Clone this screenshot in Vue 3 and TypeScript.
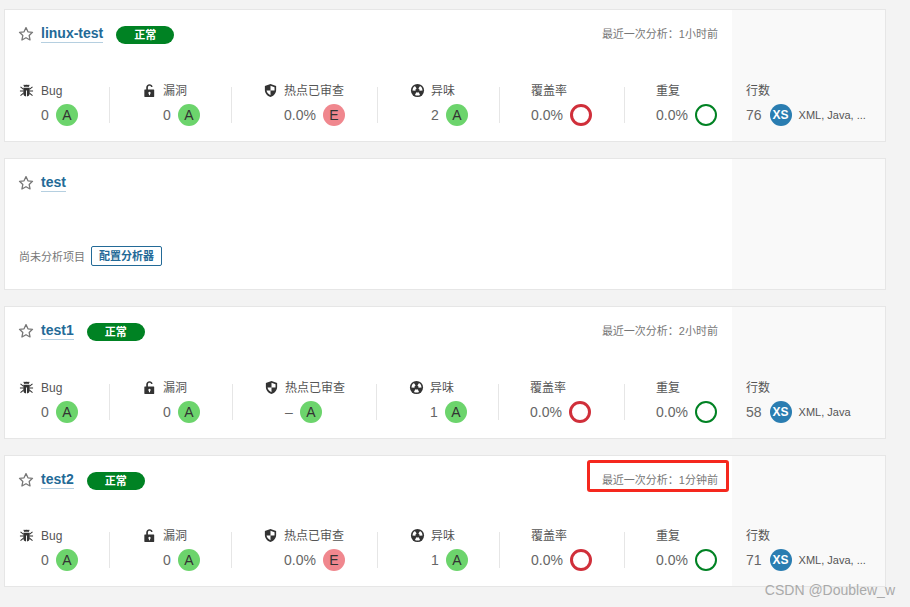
<script setup lang="ts">
type Rating = 'A' | 'E'

interface Project {
  name: string
  status: boolean
  analysis?: string
  highlight?: boolean
  height: number
  widths?: number[]
  bugs?: number
  vulns?: number
  hotspots?: string
  hotspotRating?: Rating
  smells?: number
  lines?: number
  langs?: string
}

const projects: Project[] = [
  {
    name: 'linux-test', status: true, analysis: '最近一次分析\uFF1A1小时前', height: 133,
    widths: [90, 121, 145, 121, 124], bugs: 0, vulns: 0, hotspots: '0.0%', hotspotRating: 'E',
    smells: 2, lines: 76, langs: 'XML, Java, ...',
  },
  { name: 'test', status: false, height: 132 },
  {
    name: 'test1', status: true, analysis: '最近一次分析\uFF1A2小时前', height: 133,
    widths: [90, 122, 143, 121, 125], bugs: 0, vulns: 0, hotspots: '–', hotspotRating: 'A',
    smells: 1, lines: 58, langs: 'XML, Java',
  },
  {
    name: 'test2', status: true, analysis: '最近一次分析\uFF1A1分钟前', highlight: true, height: 132,
    widths: [90, 121, 145, 121, 124], bugs: 0, vulns: 0, hotspots: '0.0%', hotspotRating: 'E',
    smells: 1, lines: 71, langs: 'XML, Java, ...',
  },
]

const starPath = 'M8 1.6l1.95 4.2 4.55.55-3.35 3.1.9 4.5L8 11.7l-4.05 2.25.9-4.5L1.5 6.35l4.55-.55z'
const smellWedge = 'M6.700 6.200L5.300 3.300A5.500 5.500 0 0 1 10.700 3.300L9.300 6.200A2.300 2.300 0 0 0 6.700 6.200Z'
</script>

<template>
  <div class="page">
    <div
      v-for="p in projects"
      :key="p.name"
      class="card"
      :style="{ height: p.height + 'px' }"
    >
      <div class="main">
        <div class="head">
          <svg class="star" viewBox="0 0 16 16" width="16" height="16">
            <path :d="starPath" fill="none" stroke="#777" stroke-width="1.3" stroke-linejoin="round" />
          </svg>
          <a class="title">{{ p.name }}</a>
          <span v-if="p.status" class="badge">正常</span>
          <span v-if="p.analysis" class="analysis">
            {{ p.analysis }}
            <i v-if="p.highlight" class="mark" />
          </span>
        </div>

        <div v-if="p.widths" class="measures">
          <div class="measure first" :style="{ width: p.widths[0] + 'px' }">
            <svg class="icon" viewBox="0 0 16 16" width="15" height="15">
              <path fill="#333" d="M5.200 3.900C5.600 2.600 6.700 1.900 8 1.900s2.400.7 2.800 2zM4.600 5h6.800v6.200c0 1.900-1.500 3.300-3.400 3.300s-3.400-1.400-3.400-3.300z" />
              <path fill="none" stroke="#333" stroke-width="1.100" d="M5 2l1.500 1.600M11 2L9.500 3.600M1.600 4.200L4.600 6.500M14.400 4.200L11.400 6.500M1 8.500h3.600M15 8.500h-3.600M1.600 13.500l3.200-2.700M14.400 13.500l-3.200-2.700" />
              <path fill="none" stroke="#fff" stroke-width="1" d="M8 8v7" />
            </svg>
            <div class="body">
              <div class="label">Bug</div>
              <div class="value"><span>{{ p.bugs }}</span><b class="rating a">A</b></div>
            </div>
          </div>
          <i class="divider" />

          <div class="measure" :style="{ width: p.widths[1] + 'px' }">
            <svg class="icon" viewBox="0 0 16 16" width="15" height="15">
              <path fill="#333" fill-rule="evenodd" d="M3 7h1.500V4.800C4.500 2.700 6 1.300 8 1.300c1.700 0 3 1 3.400 2.600l-1.700.4C9.500 3.500 8.900 3 8 3 7 3 6.300 3.700 6.300 4.800V7H12.500c.3 0 .5.200.5.500v7c0 .3-.2.500-.5.500h-9.500c-.3 0-.5-.2-.5-.500v-7c0-.3.200-.500.500-.500zM8 9.300a1.300 1.300 0 0 0-.6 2.400v1.400h1.200v-1.400A1.300 1.300 0 0 0 8 9.300z" />
            </svg>
            <div class="body">
              <div class="label">漏洞</div>
              <div class="value"><span>{{ p.vulns }}</span><b class="rating a">A</b></div>
            </div>
          </div>
          <i class="divider" />

          <div class="measure hotspot" :style="{ width: p.widths[2] + 'px' }">
            <svg class="icon" viewBox="0 0 16 16" width="15" height="15">
              <path fill="#333" fill-rule="evenodd" d="M8 1l6 2.200v4.300c0 3.500-2.500 6.300-6 7.500-3.500-1.200-6-4-6-7.500V3.200zM8 3v5H3.800c.3 2.300 2 4 4.200 5V8h4.200c.1-.3.100-.6.100-.9V4.500z" />
            </svg>
            <div class="body">
              <div class="label">热点已审查</div>
              <div class="value"><span>{{ p.hotspots }}</span><b class="rating" :class="p.hotspotRating === 'E' ? 'e' : 'a'">{{ p.hotspotRating }}</b></div>
            </div>
          </div>
          <i class="divider" />

          <div class="measure" :style="{ width: p.widths[3] + 'px' }">
            <svg class="icon" viewBox="0 0 16 16" width="15" height="15">
              <circle cx="8" cy="8" r="7" fill="#333" />
              <path fill="#fff" :d="smellWedge" transform="rotate(-60 8 8)" />
              <path fill="#fff" :d="smellWedge" transform="rotate(60 8 8)" />
              <path fill="#fff" :d="smellWedge" transform="rotate(180 8 8)" />
            </svg>
            <div class="body">
              <div class="label">异味</div>
              <div class="value"><span>{{ p.smells }}</span><b class="rating a">A</b></div>
            </div>
          </div>
          <i class="divider" />

          <div class="measure plain" :style="{ width: p.widths[4] + 'px' }">
            <div class="body">
              <div class="label">覆盖率</div>
              <div class="value"><span>0.0%</span><b class="ring red" /></div>
            </div>
          </div>
          <i class="divider" />

          <div class="measure plain">
            <div class="body">
              <div class="label">重复</div>
              <div class="value"><span>0.0%</span><b class="ring green" /></div>
            </div>
          </div>
        </div>

        <div v-else class="empty">
          <span>尚未分析项目</span>
          <a class="config">配置分析器</a>
        </div>
      </div>

      <div class="side">
        <template v-if="p.lines">
          <div class="label">行数</div>
          <div class="value">
            <span>{{ p.lines }}</span>
            <b class="size">XS</b>
            <em class="langs">{{ p.langs }}</em>
          </div>
        </template>
      </div>
    </div>

    <div class="watermark">CSDN @Doublew_w</div>
  </div>
</template>

<style>
html,
body {
  margin: 0;
  background: #f3f3f3;
}
</style>

<style scoped>
.page {
  position: relative;
  box-sizing: border-box;
  height: 607px;
  padding: 9px 24px 0 4px;
  overflow: hidden;
  font-family: "Liberation Sans", "Noto Sans CJK SC", sans-serif;
  color: #666;
}

.card {
  display: flex;
  box-sizing: border-box;
  margin-bottom: 16px;
  background: #fff;
  border: 1px solid #e6e6e6;
}

.main {
  flex: 1;
  display: flex;
  flex-direction: column;
  justify-content: space-between;
  box-sizing: border-box;
  min-width: 0;
  padding: 15px 14px 15px 14px;
}

.head {
  display: flex;
  align-items: center;
  height: 18px;
}

.star {
  width: 16px;
  margin: 0 7px 0 -1px;
  flex: none;
}

.title {
  font-size: 14px;
  font-weight: 700;
  line-height: 17px;
  color: #236a97;
  border-bottom: 1px solid #b5cfe0;
}

.badge {
  width: 58px;
  height: 18px;
  margin: 2px 0 0 13px;
  border-radius: 9px;
  background: #008223;
  color: #fff;
  font-size: 11px;
  font-weight: 700;
  line-height: 18px;
  text-align: center;
}

.analysis {
  position: relative;
  margin-left: auto;
  font-size: 11px;
  line-height: 16px;
  color: #777;
}

/* red box drawn on top of the screenshot */
.mark {
  position: absolute;
  top: -12px;
  left: -15px;
  right: -11px;
  height: 26px;
  border: 3px solid #f5281e;
  border-radius: 3px;
}

.measures {
  display: flex;
  align-items: center;
}

.measure {
  display: flex;
  box-sizing: border-box;
  padding-left: 32px;
  flex: none;
}

.measure.first {
  padding-left: 0;
}

.measure.first .icon {
  margin-right: 7px;
}

.measure.hotspot,
.measure.plain {
  padding-left: 31px;
}

.icon {
  flex: none;
  margin: 0 6px 0 0;
}

.divider {
  flex: none;
  width: 1px;
  height: 36px;
  background: #e6e6e6;
}

.label {
  font-size: 12px;
  line-height: 14px;
  padding-top: 1px;
  color: #555;
  white-space: nowrap;
}

.value {
  display: flex;
  align-items: center;
  height: 22px;
  margin-top: 6px;
  font-size: 14px;
  white-space: nowrap;
}

.rating {
  width: 22px;
  height: 22px;
  margin-left: 7px;
  border-radius: 50%;
  font-size: 14px;
  font-weight: 400;
  line-height: 22px;
  text-align: center;
  color: #333;
}

.rating.a {
  background: #6cd46c;
}

.rating.e {
  background: #f0878e;
}

.ring {
  box-sizing: border-box;
  width: 22px;
  height: 22px;
  margin-left: 7px;
  border-radius: 50%;
}

.ring.red {
  border: 3px solid #d02f3a;
}

.ring.green {
  border: 2px solid #008223;
}

.empty {
  display: flex;
  align-items: center;
  margin-bottom: 8px;
  font-size: 11px;
  color: #777;
}

.config {
  box-sizing: border-box;
  height: 20px;
  margin-left: 6px;
  padding: 0 7px;
  border: 1px solid #236a97;
  border-radius: 2px;
  color: #236a97;
  font-weight: 700;
  line-height: 18px;
}

.side {
  display: flex;
  flex-direction: column;
  justify-content: flex-end;
  box-sizing: border-box;
  width: 153px;
  flex: none;
  padding: 0 0 15px 14px;
  background: #f9f9f9;
}

.size {
  width: 22px;
  height: 22px;
  margin-left: 8px;
  border-radius: 50%;
  background: #2a7db1;
  color: #fff;
  font-size: 12px;
  font-weight: 700;
  line-height: 22px;
  text-align: center;
}

.langs {
  margin-left: 7px;
  font-size: 11px;
  font-style: normal;
  color: #555;
}

.watermark {
  position: absolute;
  right: 15px;
  bottom: 9px;
  font-size: 14px;
  line-height: 16px;
  color: #aaa;
}
</style>
